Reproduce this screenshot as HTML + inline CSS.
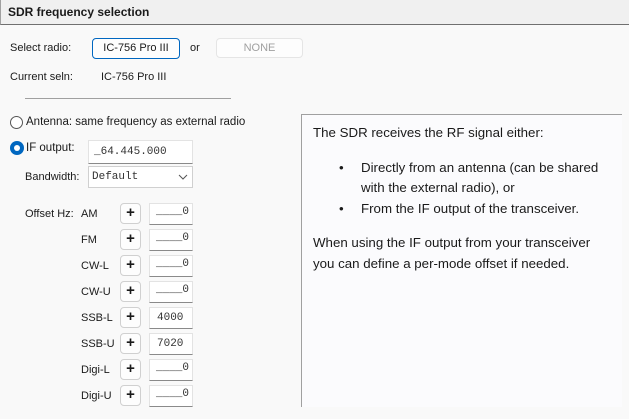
<!DOCTYPE html>
<html><head><style>
*{margin:0;padding:0;box-sizing:border-box}
body{width:629px;height:419px;background:#f9f9f9;font-family:"Liberation Sans",sans-serif;font-size:11px;color:#1a1a1a;position:relative;overflow:hidden}
.a{position:absolute;white-space:nowrap}
.hdr{left:0;top:0;width:629px;height:25px;background:#f0f0f0;border-bottom:1px solid #707070;border-left:1px solid #a0a0a0}
.btn{position:absolute;border:1px solid #d0d0d0;border-radius:4px;background:#fdfdfd;text-align:center}
.inp{position:absolute;background:#fff;border:1px solid #e3e3e3;border-bottom:1px solid #8a8a8a;font-family:"Liberation Mono",monospace;font-size:11px;color:#333}
.plus{font-weight:bold;font-size:15px;line-height:18px}
.rt{font-size:13.3px;color:#1a1a1a}
</style></head><body>
<div class="a hdr"></div>
<div class="a" style="left:8px;top:5px;font-weight:bold;font-size:12px">SDR frequency selection</div>

<div class="a" style="left:10px;top:42px">Select radio:</div>
<div class="btn" style="left:92px;top:38px;width:88px;height:21px;border-color:#0067c0;line-height:19px">IC-756 Pro III</div>
<div class="a" style="left:190px;top:42px">or</div>
<div class="btn" style="left:216px;top:38px;width:87px;height:20px;border-color:#e5e5e5;color:#a0a0a0;line-height:18px">NONE</div>

<div class="a" style="left:10px;top:71px">Current seln:</div>
<div class="a" style="left:101px;top:71px">IC-756 Pro III</div>
<div class="a" style="left:25px;top:98px;width:206px;height:1px;background:#a0a0a0"></div>

<div class="a" style="left:10px;top:116px;width:13px;height:13px;border:1px solid #555;border-radius:50%;background:#fff"></div>
<div class="a" style="left:26px;top:116px;font-size:11.5px">Antenna: same frequency as external radio</div>
<div class="a" style="left:10px;top:141px;width:14px;height:14px;border-radius:50%;background:#0067c0"></div>
<div class="a" style="left:14px;top:145px;width:6px;height:6px;border-radius:50%;background:#fff"></div>
<div class="a" style="left:26px;top:142px;font-size:11.5px">IF output:</div>
<div class="inp" style="left:88px;top:140px;width:105px;height:24px;padding:5px 0 0 5px">_64.445.000</div>
<div class="a" style="left:25px;top:171px">Bandwidth:</div>
<div class="inp" style="left:88px;top:166px;width:105px;height:22px;padding:4px 0 0 3px;border-color:#d0d0d0">Default</div>
<svg class="a" style="left:178px;top:174px" width="10" height="6"><path d="M1 1 L5 5 L9 1" fill="none" stroke="#555" stroke-width="1"/></svg>

<div class="a" style="left:25px;top:208px">Offset Hz:</div>

<div class="a" style="left:81px;top:208px">AM</div>
<div class="btn plus" style="left:120px;top:203px;width:21px;height:21px">+</div>
<div class="inp" style="left:149px;top:203px;width:44px;height:22px;padding:2px 0 0 6px">____0</div>

<div class="a" style="left:81px;top:234px">FM</div>
<div class="btn plus" style="left:120px;top:229px;width:21px;height:21px">+</div>
<div class="inp" style="left:149px;top:229px;width:44px;height:22px;padding:2px 0 0 6px">____0</div>

<div class="a" style="left:81px;top:260px">CW-L</div>
<div class="btn plus" style="left:120px;top:255px;width:21px;height:21px">+</div>
<div class="inp" style="left:149px;top:255px;width:44px;height:22px;padding:2px 0 0 6px">____0</div>

<div class="a" style="left:81px;top:286px">CW-U</div>
<div class="btn plus" style="left:120px;top:281px;width:21px;height:21px">+</div>
<div class="inp" style="left:149px;top:281px;width:44px;height:22px;padding:2px 0 0 6px">____0</div>

<div class="a" style="left:81px;top:312px">SSB-L</div>
<div class="btn plus" style="left:120px;top:307px;width:21px;height:21px">+</div>
<div class="inp" style="left:149px;top:307px;width:44px;height:22px;padding:4px 0 0 7px">4000</div>

<div class="a" style="left:81px;top:338px">SSB-U</div>
<div class="btn plus" style="left:120px;top:333px;width:21px;height:21px">+</div>
<div class="inp" style="left:149px;top:333px;width:44px;height:22px;padding:4px 0 0 7px">7020</div>

<div class="a" style="left:81px;top:364px">Digi-L</div>
<div class="btn plus" style="left:120px;top:359px;width:21px;height:21px">+</div>
<div class="inp" style="left:149px;top:359px;width:44px;height:22px;padding:2px 0 0 6px">____0</div>

<div class="a" style="left:81px;top:390px">Digi-U</div>
<div class="btn plus" style="left:120px;top:385px;width:21px;height:21px">+</div>
<div class="inp" style="left:149px;top:385px;width:44px;height:22px;padding:2px 0 0 6px">____0</div>

<div class="a" style="left:301px;top:114px;width:321px;height:293px;background:#fbfbfd;border-left:1px solid #a0a0a0;border-top:1px solid #a0a0a0"></div>
<div class="a rt" style="left:313px;top:125px">The SDR receives the RF signal either:</div>
<div class="a rt" style="left:339px;top:160px">•</div>
<div class="a rt" style="left:361px;top:160px">Directly from an antenna (can be shared</div>
<div class="a rt" style="left:361px;top:180px">with the external radio), or</div>
<div class="a rt" style="left:339px;top:201px">•</div>
<div class="a rt" style="left:361px;top:201px">From the IF output of the transceiver.</div>
<div class="a rt" style="left:313px;top:235px">When using the IF output from your transceiver</div>
<div class="a rt" style="left:313px;top:256px">you can define a per-mode offset if needed.</div>
</body></html>
